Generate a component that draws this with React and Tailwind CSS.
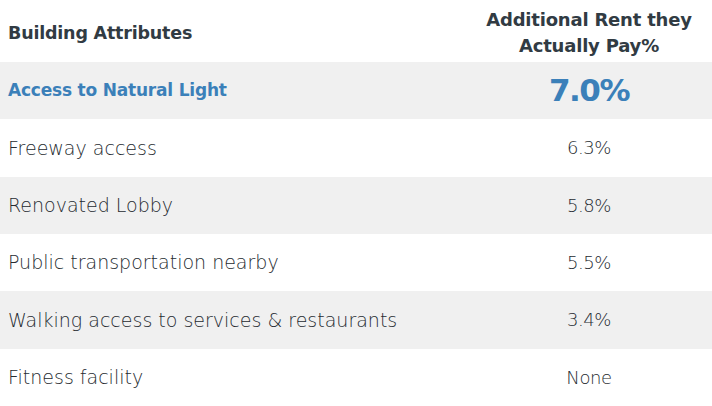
import React from "react";

const rows = [
  { name: "Access to Natural Light", value: "7.0%", highlight: true },
  { name: "Freeway access", value: "6.3%" },
  { name: "Renovated Lobby", value: "5.8%" },
  { name: "Public transportation nearby", value: "5.5%" },
  { name: "Walking access to services & restaurants", value: "3.4%" },
  { name: "Fitness facility", value: "None" },
];

const App = () => {
  return (
    <div
      className="w-[712px] h-[406px] bg-white text-[#3d4349] overflow-hidden"
      style={{ fontFamily: '"DejaVu Sans", sans-serif' }}
    >
      <div className="flex h-[62px] items-center pt-1">
        <div className="w-[466px] pl-2 text-[17.5px] font-bold text-[#313b43] tracking-[-0.2px]">
          Building Attributes
        </div>
        <div className="flex-1 text-center text-[18px] font-bold leading-[26px] text-[#313b43] tracking-[-0.2px]">
          Additional Rent they
          <br />
          Actually Pay%
        </div>
      </div>
      {rows.map((row, i) => (
        <div
          key={row.name}
          className={`flex h-[57.33px] items-center ${
            i % 2 === 0 ? "bg-[#f0f0f0]" : "bg-white"
          }`}
        >
          <div
            className={`w-[466px] pl-2 ${
              row.highlight
                ? "text-[17px] font-bold text-[#3b80b9] tracking-[-0.2px]"
                : "text-[19px] font-light text-[#262b30]"
            }`}
          >
            {row.name}
          </div>
          <div
            className={`flex-1 text-center ${
              row.highlight
                ? "text-[31px] font-bold text-[#3b80b9] tracking-[-1.5px]"
                : "text-[18px] font-light text-[#262b30] tracking-[-0.4px]"
            }`}
          >
            {row.value}
          </div>
        </div>
      ))}
    </div>
  );
};

export default App;
